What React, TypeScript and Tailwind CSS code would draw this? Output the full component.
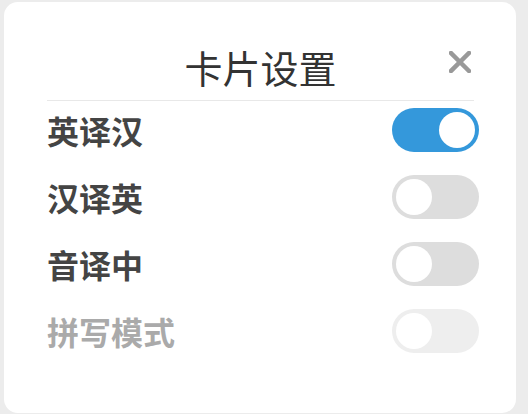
import React, { useState } from 'react';

const font = { fontFamily: '"Noto Sans CJK SC", "Noto Sans", sans-serif' };

const initial = [
  { key: 'en2zh', label: '英译汉', on: true, disabled: false },
  { key: 'zh2en', label: '汉译英', on: false, disabled: false },
  { key: 'audio', label: '音译中', on: false, disabled: false },
  { key: 'spell', label: '拼写模式', on: false, disabled: true },
];

const Toggle: React.FC<{ on: boolean; disabled?: boolean; onClick: () => void }> = ({ on, disabled, onClick }) => {
  const track = on ? 'bg-[#3498db]' : disabled ? 'bg-[#eeeeee]' : 'bg-[#dddddd]';
  return (
    <button
      type="button"
      disabled={disabled}
      onClick={onClick}
      className={`flex h-[44px] w-[87px] items-center rounded-full p-[4px] ${track} ${on ? 'justify-end' : 'justify-start'}`}
    >
      <span className="block h-[36px] w-[36px] rounded-full bg-white" />
    </button>
  );
};

export default function App() {
  const [items, setItems] = useState(initial);

  return (
    <div className="min-h-screen bg-[#ececec] pl-[4px] pt-[2px]" style={font}>
      <div className="h-[411px] w-[512px] rounded-[14px] bg-white pl-[43px] pr-[37px]">
        {/* Header */}
        <div className="mr-[5px] grid grid-cols-[1fr_auto_1fr] items-center border-b border-[#e8e8e8] pb-[13px] pt-[45px]">
          <div />
          <h1 className="text-[38px] font-normal leading-[40px] text-[#333333]">卡片设置</h1>
          <div className="flex justify-end pr-[3px]">
            <svg width="22" height="22" viewBox="0 0 22 22" className="-mt-[10px]">
              <path d="M2 2 L20 20 M20 2 L2 20" stroke="#999999" strokeWidth="4.5" strokeLinecap="square" />
            </svg>
          </div>
        </div>

        {/* Options */}
        <div className="mt-[7px] flex flex-col gap-[23px]">
          {items.map((item, i) => (
            <div key={item.key} className="flex h-[44px] items-center justify-between">
              <span
                className={`text-[32px] font-bold leading-none ${item.disabled ? 'text-[#aaaaaa]' : 'text-[#444444]'}`}
              >
                {item.label}
              </span>
              <Toggle
                on={item.on}
                disabled={item.disabled}
                onClick={() =>
                  setItems((prev) => prev.map((p, j) => (j === i ? { ...p, on: !p.on } : p)))
                }
              />
            </div>
          ))}
        </div>
      </div>
    </div>
  );
}
